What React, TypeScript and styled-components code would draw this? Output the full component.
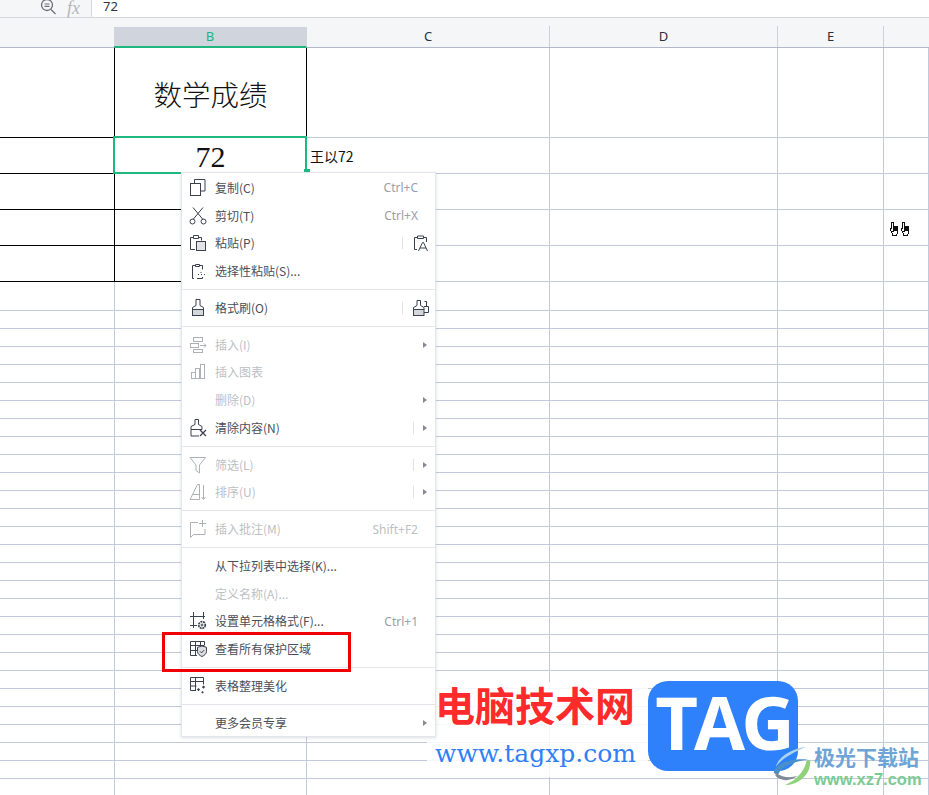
import React from 'react';
import styled, { createGlobalStyle } from 'styled-components';

const cjk = '"Noto Sans CJK SC", "Noto Sans", sans-serif';

const GlobalStyle = createGlobalStyle`
  html, body {
    margin: 0;
    padding: 0;
    background: #fff;
    font-family: ${cjk};
  }
  * {
    box-sizing: border-box;
  }
`;

const cellWidths = [115, 192, 243, 228, 106, 45];
const headWidths = [114, 193, 243, 228, 106, 45];
const headLabels = ['', 'B', 'C', 'D', 'E', ''];

const rowHeights = [90, 36, 36, 36, 36, 29, ...Array(27).fill(18)];

const Page = styled.div`
  position: relative;
  width: 929px;
  height: 795px;
  overflow: hidden;
  background: #fff;
`;

const FormulaBar = styled.div`
  display: flex;
  align-items: flex-start;
  height: 18px;
  background: #f5f6f8;
  border-bottom: 1px solid #d4d6da;
`;

const ZoomIcon = styled.svg`
  width: 18px;
  height: 16px;
  margin-left: 40px;
  flex: none;
`;

const Fx = styled.span`
  width: 33px;
  padding-left: 9px;
  font: italic 18px "Liberation Serif", serif;
  color: #b4b6ba;
  flex: none;
  line-height: 17px;
`;

const FormulaInput = styled.div`
  flex: 1;
  height: 17px;
  padding-left: 11px;
  background: #fff;
  border-left: 1px solid #d4d6da;
  border-bottom-left-radius: 3px;
  font: 13px/12px "Noto Sans", sans-serif;
  color: #333;
`;

const Header = styled.div`
  display: flex;
  align-items: flex-end;
  height: 30px;
  background: #f5f6f8;
  border-bottom: 1px solid #b3b8c8;
`;

const HeadCell = styled.div<{ $active: boolean; $last: boolean }>`
  height: 21px;
  flex: none;
  display: flex;
  align-items: center;
  justify-content: center;
  padding-bottom: 1px;
  font: 13px "Noto Sans", sans-serif;
  color: ${(p) => (p.$active ? '#1fb67f' : '#2c2f36')};
  background: ${(p) => (p.$active ? '#d0d4dc' : 'transparent')};
  border-right: 1px solid ${(p) => (p.$active || p.$last ? 'transparent' : '#cdd0d8')};
  ${(p) => p.$active && 'border-bottom: 2px solid #1fb67f; margin-bottom: -1px;'}
`;

const Row = styled.div<{ $height: number }>`
  display: flex;
  height: ${(p) => p.$height}px;
`;

const Cell = styled.div<{ $ink: boolean; $inkBottom: boolean }>`
  position: relative;
  flex: none;
  display: flex;
  align-items: center;
  justify-content: center;
  border-right: 1px solid ${(p) => (p.$ink ? '#000' : '#c2c9dc')};
  border-bottom: 1px solid ${(p) => (p.$inkBottom ? '#000' : '#c2c9dc')};
`;

const TitleText = styled.span`
  font-family: ${cjk};
  font-weight: 300;
  font-size: 28.5px;
  line-height: 1;
  color: #111;
  margin-top: 3px;
`;

const ScoreText = styled.span`
  font: 30px/1 "Liberation Serif", serif;
  color: #111;
  margin-top: 2px;
`;

const NameText = styled.span`
  align-self: center;
  width: 100%;
  padding-left: 3px;
  font-size: 14px;
  line-height: 16px;
  color: #111;
`;

const Selection = styled.div`
  position: absolute;
  left: -2px;
  top: -2px;
  width: 194px;
  height: 38px;
  border: 2px solid #1db97f;
`;

const SelectionHandle = styled.div`
  position: absolute;
  right: -5px;
  bottom: -1px;
  width: 6px;
  height: 4px;
  background: #1db97f;
`;

const Menu = styled.div`
  position: absolute;
  left: 181px;
  top: 172px;
  width: 255px;
  height: 565px;
  padding-top: 2px;
  background: #fff;
  border: 1px solid #e2e5ec;
  box-shadow: 0 1px 3px rgba(120, 130, 150, 0.25);
`;

const Item = styled.div<{ $disabled?: boolean }>`
  display: flex;
  align-items: center;
  height: 27.75px;
  padding-left: 7px;
  padding-bottom: 2px;
  font-size: 12px;
  color: ${(p) => (p.$disabled ? '#bcbfc4' : '#4a4f5a')};
`;

const IconSlot = styled.svg`
  width: 18px;
  height: 18px;
  flex: none;
  margin-right: 8px;
  fill: none;
  stroke: currentColor;
  stroke-width: 1;
`;

const IconTint = styled.span<{ $disabled?: boolean }>`
  display: flex;
  color: ${(p) => (p.$disabled ? '#aeb1b6' : '#3a4150')};
`;

const Blank = styled.span`
  width: 26px;
  flex: none;
`;

const Label = styled.span`
  flex: 1;
  line-height: 16px;
  white-space: nowrap;
`;

const Shortcut = styled.span<{ $disabled?: boolean }>`
  margin-right: 17px;
  font: 12px "Noto Sans", sans-serif;
  color: ${(p) => (p.$disabled ? '#bcbfc4' : '#9a9ea6')};
`;

const SplitLine = styled.span<{ $gap: number }>`
  width: 1px;
  height: 12px;
  background: #dfe1e6;
  margin-right: ${(p) => p.$gap}px;
`;

const Arrow = styled.span`
  width: 0;
  height: 0;
  margin-right: 8px;
  border-left: 4px solid #858a94;
  border-top: 3px solid transparent;
  border-bottom: 3px solid transparent;
`;

const SplitIcon = styled.svg`
  width: 18px;
  height: 18px;
  margin-right: 5px;
  fill: none;
  stroke: #3a4150;
  stroke-width: 1;
`;

const Divider = styled.div`
  height: 1px;
  margin: 3px 0 5px;
  background: #e4e6eb;
`;

const RedBox = styled.div`
  position: absolute;
  left: 162px;
  top: 632px;
  width: 189px;
  height: 40px;
  border: 3px solid #f00000;
`;

const Cursor = styled.svg`
  position: absolute;
  left: 889px;
  top: 221px;
  width: 20px;
  height: 16px;
  shape-rendering: crispEdges;
`;

const Watermark = styled.div`
  position: absolute;
  left: 427px;
  top: 682px;
  width: 502px;
  height: 113px;
  display: flex;
  align-items: flex-start;
`;

const SiteBlock = styled.div`
  width: 221px;
  height: 95px;
  padding: 0 0 0 8px;
  background: rgba(255, 255, 255, 0.85);
  flex: none;
`;

const SiteName = styled.div`
  font-size: 40px;
  line-height: 44px;
  font-weight: 700;
  color: #ff2a2a;
  white-space: nowrap;
`;

const SiteUrl = styled.div`
  margin-top: 14px;
  font: 25px/28px "DejaVu Serif", serif;
  color: #2f80f5;
  white-space: nowrap;
`;

const TagBox = styled.div`
  width: 150px;
  height: 90px;
  margin-top: -1px;
  border-radius: 20px;
  background: #2e80fb;
  color: #fff;
  font: 700 74px/82px "Open Sans", sans-serif;
  letter-spacing: -4px;
  text-align: center;
  flex: none;
`;

const BrandBlock = styled.div`
  position: absolute;
  left: 343px;
  top: 58px;
  width: 159px;
  height: 50px;
  display: flex;
`;

const Swirl = styled.svg`
  width: 44px;
  height: 42px;
  margin-top: 5px;
  flex: none;
`;

const BrandText = styled.div`
  padding-top: 6px;
  white-space: nowrap;
`;

const BrandName = styled.div`
  font-size: 21px;
  line-height: 21px;
  font-weight: 700;
  color: #6ea5d6;
`;

const BrandUrl = styled.div`
  margin-top: 3px;
  font: 700 16.5px/18px "Liberation Sans", sans-serif;
  color: #7ccb92;
`;

const icons: Record<string, React.ReactNode> = {
  copy: (
    <>
      <path d="M5.500 4.500V.5h10.500v11.500h-4.500" />
      <rect x="1.500" y="4.500" width="10" height="12" fill="#fff" />
    </>
  ),
  cut: (
    <>
      <path d="M4 .5l10 12M14 .5L4 12.500" />
      <circle cx="3.500" cy="14.500" r="2.500" />
      <circle cx="14.500" cy="14.500" r="2.500" />
    </>
  ),
  paste: (
    <>
      <path d="M6 15.500H1.500V3.500h3M9.500 3.500h3v3" />
      <path d="M4.500 4.500v-3h5v3z" />
      <rect x="7.500" y="7.500" width="9" height="9" fill="#e2e3e6" />
    </>
  ),
  pasteSpecial: (
    <>
      <path d="M5 16.500H3.500v-13h3M10.500 3.500h3v4M13.500 15v1.500H8" />
      <path d="M6.500 4.500v-2h4v2z" />
      <path d="M9 12.500h1M12 12.500h1M15 12.500h1M12 10v1" />
    </>
  ),
  brush: (
    <>
      <rect x="3.500" y="10.500" width="11" height="6" fill="#d4d6da" />
      <path d="M7 .5h4v6l3.500 2v2h-11v-2L7 6.500z" />
    </>
  ),
  insert: (
    <>
      <rect x="4.500" y="1.500" width="9" height="4" />
      <rect x="1.500" y="7.500" width="8" height="4" />
      <rect x="4.500" y="13.500" width="9" height="3" />
      <path d="M11 9.500h6M15 7.500l2 2-2 2" />
    </>
  ),
  chart: (
    <>
      <rect x="2.500" y="9.500" width="4" height="6" />
      <rect x="6.500" y="5.500" width="4" height="10" />
      <rect x="11.500" y="1.500" width="4" height="14" />
    </>
  ),
  clear: (
    <>
      <path d="M6 .5h3.500v5l3.500 2v3H2v-3l4-2z" />
      <path d="M2 10.500v6.500h8" />
      <path d="M11 11l6 6M17 11l-6 6" strokeWidth="1.300" />
    </>
  ),
  filter: <path d="M1 1.500h15.500l-6 7.500v8l-3.500-2.500V9z" />,
  sort: (
    <>
      <path d="M1 16.500L8.500 1.500h2v15H1zM4 11.500h6" />
      <path d="M14.500 2v14M12.500 14l2 2.500 2-2.500" />
    </>
  ),
  comment: (
    <>
      <path d="M9 2.500H1.500v15l3-3h11.500V9" />
      <path d="M13.500 0v7M10 3.500h7" />
    </>
  ),
  cellFormat: (
    <>
      <path d="M4.500 0v16M1 4.500h15M1 13.500h7M14.500 0v7" />
      <circle cx="13" cy="13" r="3.300" strokeWidth="1.700" strokeDasharray="2 .7" />
      <circle cx="13" cy="13" r="1" />
    </>
  ),
  protect: (
    <>
      <path d="M8 15.500H1.500V1.500h14V5M1.500 5.500h14M1.500 10.500H8M6.500 1.500v14M11.500 1.500V5" />
      <path d="M13 6l4.500 1.300v4.200c0 2.500-2.300 4-4.500 5-2.200-1-4.500-2.500-4.500-5V7.300z" fill="#dcdde0" />
      <path d="M11 11.300l1.600 1.600 2.500-2.800" />
    </>
  ),
  beautify: (
    <>
      <path d="M7 13.500H1.500V.5h13v7M1.500 4.500h13M1.500 9h6M6.500 .5v13" />
      <path d="M9.500 11l1.600 1.600-1.600 1.600-1.600-1.600zM14.500 8.500l1.600 1.600-1.600 1.600-1.600-1.600zM13.500 14l1.300 1.300-1.300 1.300-1.300-1.300z" fill="currentColor" stroke="none" />
    </>
  ),
};

interface MenuEntry {
  icon?: string;
  label: string;
  shortcut?: string;
  disabled?: boolean;
  arrow?: boolean;
  line?: boolean;
  split?: 'pasteText' | 'brushPlus';
}

const menuSections: MenuEntry[][] = [
  [
    { icon: 'copy', label: '复制(C)', shortcut: 'Ctrl+C' },
    { icon: 'cut', label: '剪切(T)', shortcut: 'Ctrl+X' },
    { icon: 'paste', label: '粘贴(P)', split: 'pasteText' },
    { icon: 'pasteSpecial', label: '选择性粘贴(S)...' },
  ],
  [{ icon: 'brush', label: '格式刷(O)', split: 'brushPlus' }],
  [
    { icon: 'insert', label: '插入(I)', disabled: true, arrow: true },
    { icon: 'chart', label: '插入图表', disabled: true },
    { label: '删除(D)', disabled: true, arrow: true },
    { icon: 'clear', label: '清除内容(N)', arrow: true, line: true },
  ],
  [
    { icon: 'filter', label: '筛选(L)', disabled: true, arrow: true, line: true },
    { icon: 'sort', label: '排序(U)', disabled: true, arrow: true, line: true },
  ],
  [{ icon: 'comment', label: '插入批注(M)', disabled: true, shortcut: 'Shift+F2' }],
  [
    { label: '从下拉列表中选择(K)...' },
    { label: '定义名称(A)...', disabled: true },
    { icon: 'cellFormat', label: '设置单元格格式(F)...', shortcut: 'Ctrl+1' },
    { icon: 'protect', label: '查看所有保护区域' },
  ],
  [{ icon: 'beautify', label: '表格整理美化' }],
  [{ label: '更多会员专享', arrow: true }],
];

const MenuRow = ({ entry }: { entry: MenuEntry }) => (
  <Item $disabled={entry.disabled}>
    {entry.icon ? (
      <IconTint $disabled={entry.disabled}>
        <IconSlot viewBox="0 0 18 18">{icons[entry.icon]}</IconSlot>
      </IconTint>
    ) : (
      <Blank />
    )}
    <Label>{entry.label}</Label>
    {entry.shortcut && <Shortcut $disabled={entry.disabled}>{entry.shortcut}</Shortcut>}
    {entry.line && <SplitLine $gap={9} />}
    {entry.arrow && <Arrow />}
    {entry.split && <SplitLine $gap={9} />}
    {entry.split === 'pasteText' && (
      <SplitIcon viewBox="0 0 18 18">
        <path d="M5 15.500H2.500v-12h3M11.500 3.500h3V8" />
        <path d="M5.500 4.500v-2.500h6v2.500z" />
        <path d="M6.500 17l4-8.500h1l4 8.500M8 14h6" />
      </SplitIcon>
    )}
    {entry.split === 'brushPlus' && (
      <SplitIcon viewBox="0 0 18 18">
        <path d="M12 7.500h4.500v6H12M12.500 2.500h2v5" />
        <rect x="1.500" y="10.500" width="10.500" height="6" fill="#d4d6da" />
        <path d="M5 1.500h3.500v5l3.500 2v2H1.500v-2L5 6.500z" fill="#fff" />
      </SplitIcon>
    )}
  </Item>
);

export default function App() {
  return (
    <Page>
      <GlobalStyle />
      <FormulaBar>
        <ZoomIcon viewBox="0 0 18 16">
          <circle cx="7" cy="5" r="5.500" fill="none" stroke="#6b6f76" strokeWidth="1.300" />
          <path d="M4.500 4h5M4.500 6.300h5M11 9.500l4.500 4.500" stroke="#6b6f76" strokeWidth="1.200" />
        </ZoomIcon>
        <Fx>fx</Fx>
        <FormulaInput>72</FormulaInput>
      </FormulaBar>

      <Header>
        {headWidths.map((w, i) => (
          <HeadCell key={i} style={{ width: w }} $active={i === 1} $last={i === 5 || i === 0}>
            {headLabels[i]}
          </HeadCell>
        ))}
      </Header>

      {rowHeights.map((h, r) => (
        <Row key={r} $height={h}>
          {cellWidths.map((w, c) => (
            <Cell key={c} style={{ width: w }} $ink={r < 5 && c < 2} $inkBottom={r < 5 && c < 2}>
              {r === 0 && c === 1 && <TitleText>数学成绩</TitleText>}
              {r === 1 && c === 1 && (
                <>
                  <ScoreText>72</ScoreText>
                  <Selection>
                    <SelectionHandle />
                  </Selection>
                </>
              )}
              {r === 1 && c === 2 && <NameText>王以72</NameText>}
            </Cell>
          ))}
        </Row>
      ))}

      <Cursor viewBox="0 0 20 16">
        <path d="M2.500 1.500h2v4h4v6l-1 3h-4v-2l-2-3v-2h1z" fill="#fff" stroke="#111" />
        <rect x="4" y="6" width="4" height="4" fill="#111" />
        <rect x="3" y="10" width="2" height="1" fill="#111" />
        <path d="M13.500 1.500h2v4h4v6l-1 3h-4v-2l-2-3v-2h1z" fill="#fff" stroke="#111" />
        <rect x="15" y="6" width="4" height="4" fill="#111" />
        <rect x="14" y="10" width="2" height="1" fill="#111" />
      </Cursor>

      <Watermark>
        <SiteBlock>
          <SiteName>电脑技术网</SiteName>
          <SiteUrl>www.tagxp.com</SiteUrl>
        </SiteBlock>
        <TagBox>TAG</TagBox>
        <BrandBlock>
          <Swirl viewBox="0 0 44 46">
            <path d="M38 2C22 4 8 12 4 24c8-10 20-16 34-22z" fill="#a8d4ee" />
            <path d="M2 30C4 20 22 14 40 16 30 17 12 22 8 30c-1 3-3 3-6 0z" fill="#4a90c8" />
            <path d="M14 44c14 0 28-10 28-26 0-2-2-2-4-1-2 12-12 22-24 27z" fill="#8fd27a" />
            <path d="M4 34c6 6 16 6 24 0-8 2-16 2-24-4z" fill="#7f8a96" />
          </Swirl>
          <BrandText>
            <BrandName>极光下载站</BrandName>
            <BrandUrl>www.xz7.com</BrandUrl>
          </BrandText>
        </BrandBlock>
      </Watermark>

      <Menu>
        {menuSections.map((section, s) => (
          <React.Fragment key={s}>
            {s > 0 && <Divider />}
            {section.map((entry) => (
              <MenuRow key={entry.label} entry={entry} />
            ))}
          </React.Fragment>
        ))}
      </Menu>
      <RedBox />
    </Page>
  );
}
